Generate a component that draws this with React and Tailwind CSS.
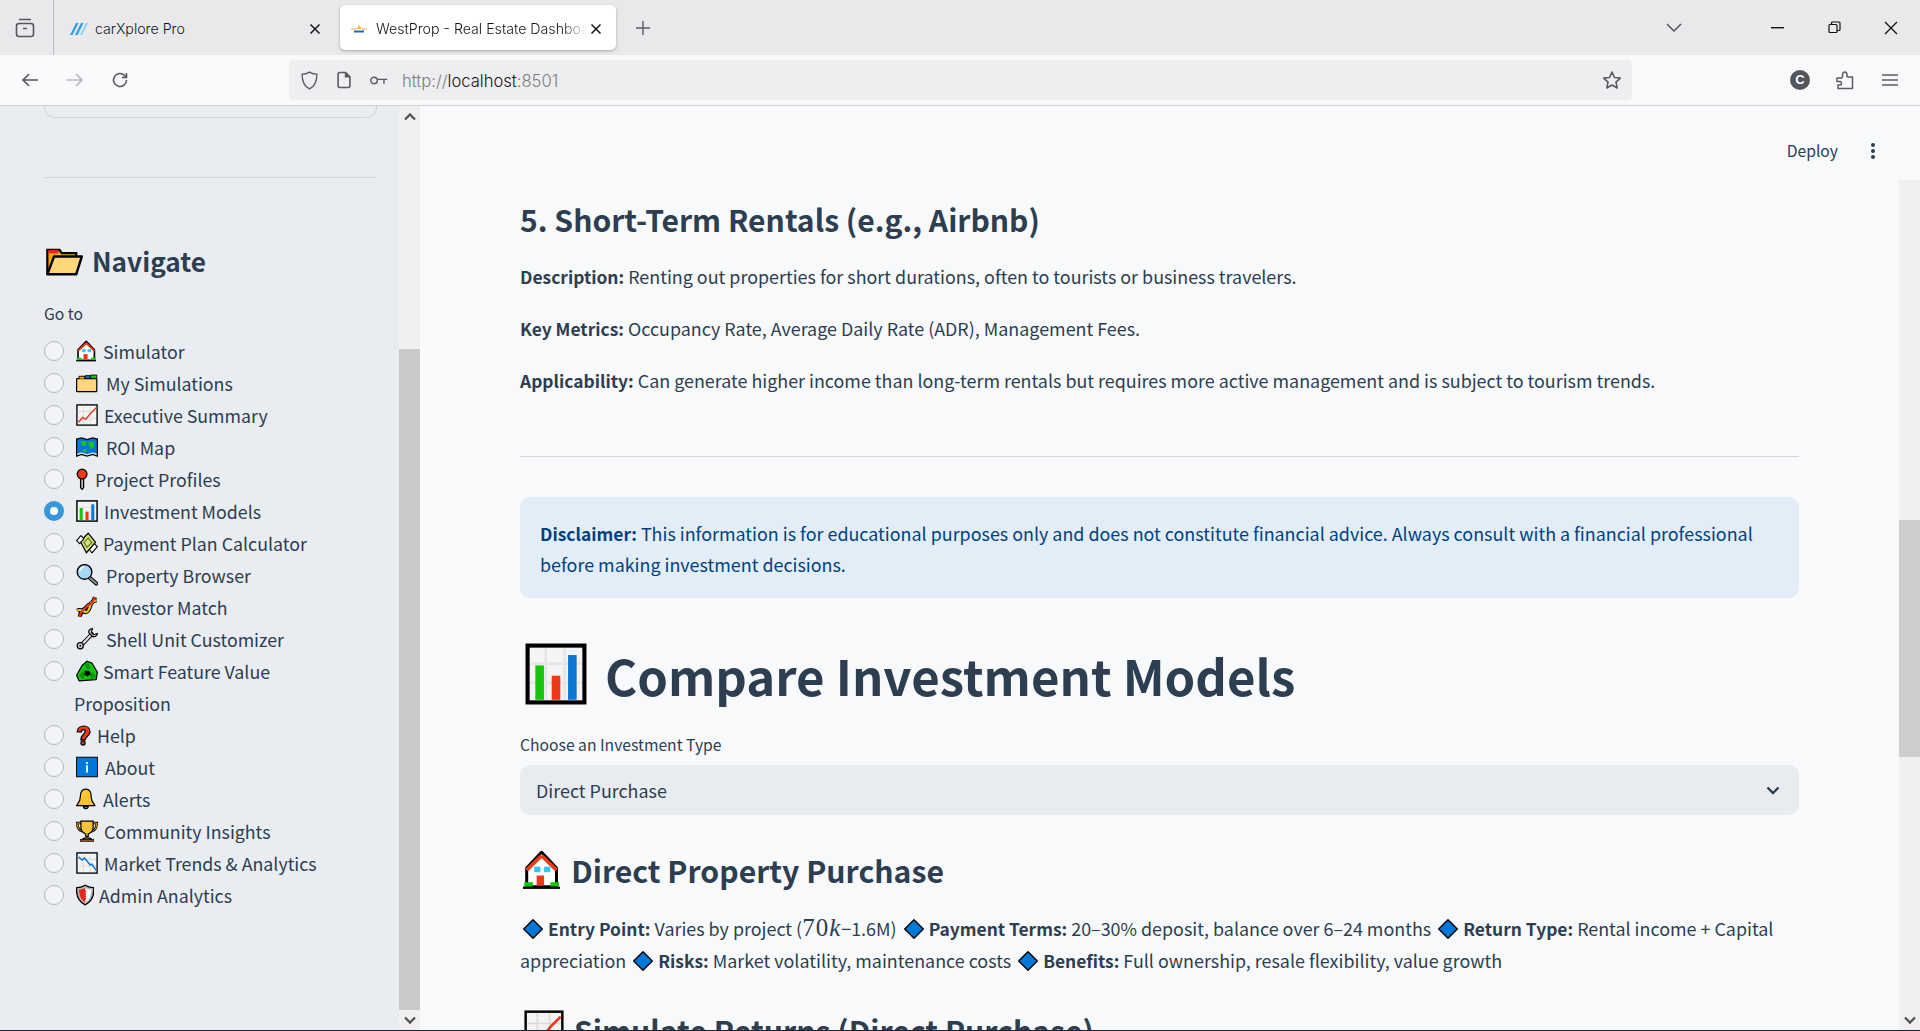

import React from "react";

const Emoji = ({ size = 22, w, children, vb = "0 0 36 36", className = "", par }) => (
  <svg width={w || size} height={size} viewBox={vb} preserveAspectRatio={par} className={"shrink-0 " + className}>{children}</svg>
);

const House = ({ size = 22 }) => (
  <Emoji size={size} w={size * 0.93} vb="3 0 30 36" par="none">
    <path d="M18 2 L6 16 V33 H30 V16 Z" fill="#fff" stroke="#000" strokeWidth="2.400" strokeLinejoin="round" />
    <path d="M18 5 L6 18 M18 5 L30 18" stroke="#ea3a17" strokeWidth="3" fill="none" />
    <rect x="12" y="15" width="5" height="5" fill="#35c6f4" />
    <rect x="20" y="15" width="5" height="5" fill="#35c6f4" />
    <rect x="14" y="23" width="6" height="9" fill="#ea3a17" />
    <rect x="4" y="29" width="7" height="4" fill="#16c60c" />
    <rect x="25" y="29" width="7" height="4" fill="#16c60c" />
    <rect x="3" y="33" width="30" height="2" fill="#000" />
  </Emoji>
);
const OpenFolder = ({ size = 22 }) => (
  <Emoji size={size}>
    <path d="M3 29 V8 H14 L16 11 H29 V16" fill="#f7a70b" stroke="#000" strokeWidth="2" />
    <path d="M4 8 H13 V11 H4Z" fill="#e8261a" />
    <path d="M3 30 L9 14 H34 L29 30 Z" fill="#ffd679" stroke="#000" strokeWidth="2.200" strokeLinejoin="round" />
  </Emoji>
);
const Dividers = ({ size = 22 }) => (
  <Emoji size={size}>
    <rect x="1" y="11" width="33" height="21" rx="1" fill="#ffd679" stroke="#000" strokeWidth="2" />
    <path d="M5 11 V7 H14 V11" fill="#f7a70b" stroke="#000" strokeWidth="1.500" />
    <path d="M15 10 V6 H23 V10" fill="#0c78d6" stroke="#000" strokeWidth="1.500" />
    <path d="M24 10 V5 H34 V10" fill="#16c60c" stroke="#000" strokeWidth="1.500" />
  </Emoji>
);
const ChartBase = ({ children, size }) => (
  <Emoji size={size}>
    <rect x="1.500" y="1.500" width="33" height="33" fill="#f4f4f4" stroke="#000" strokeWidth="2.200" />
    <path d="M12 3V33M23 3V33M3 12H33M3 23H33" stroke="#dcdcdc" strokeWidth="1.600" />
    {children}
  </Emoji>
);
const ChartUp = ({ size = 22 }) => (
  <ChartBase size={size}>
    <path d="M4 30 L11 22 L16 25 L24 15 L33 6" stroke="#ea3a17" strokeWidth="2.400" fill="none" />
  </ChartBase>
);
const ChartDown = ({ size = 22 }) => (
  <ChartBase size={size}>
    <path d="M4 8 L10 13 L14 10 L23 21 L26 20 L33 30" stroke="#0c78d6" strokeWidth="2.400" fill="none" />
  </ChartBase>
);
const BarChart = ({ size = 22, className = "" }) => (
  <Emoji size={size} className={className}>
    <rect x="1.500" y="1.500" width="33" height="33" fill="#f4f4f4" stroke="#000" strokeWidth="2.400" />
    <path d="M12 3V33M23 3V33M3 12H33M3 23H33" stroke="#e6e6e6" strokeWidth="1.600" />
    <rect x="6" y="13" width="5" height="20" fill="#16c60c" />
    <rect x="15.500" y="19" width="5" height="14" fill="#ea3a17" />
    <rect x="25" y="7" width="5" height="26" fill="#0c78d6" />
  </Emoji>
);
const MapIcon = ({ size = 22 }) => (
  <Emoji size={size}>
    <path d="M1 5 L9 3 L18 6 L27 3 L35 5 V33 L27 30 L18 33 L9 30 L1 33Z" fill="#0c78d6" />
    <path d="M9 8 L16 8 L17 14 L12 17 L8 13Z M20 10 L29 9 L30 18 L24 21 L21 16Z M12 22 L17 21 L16 27 L13 27Z" fill="#16c60c" />
    <path d="M1 29 L9 27 L18 30 L27 27 L35 29 V33 L27 30 L18 33 L9 30 L1 33Z" fill="#eee" />
    <path d="M1 5 L9 3 L18 6 L27 3 L35 5 V33 L27 30 L18 33 L9 30 L1 33Z" fill="none" stroke="#000" strokeWidth="2" />
  </Emoji>
);
const Pin = ({ size = 22 }) => (
  <Emoji size={size} w={(size * 20) / 36} vb="8 0 20 36">
    <circle cx="18" cy="10" r="8" fill="#ea3a17" stroke="#000" strokeWidth="2" />
    <path d="M15.500 18 H20.500 V32 L18 35 L15.500 32Z" fill="#b8b8b8" stroke="#000" strokeWidth="2" />
  </Emoji>
);
const PaymentIcon = ({ size = 22 }) => (
  <Emoji size={size}>
    <path d="M7 15 L20 2 L32 17 L17 34 Z" fill="#d5de7a" stroke="#000" strokeWidth="2" strokeLinejoin="round" />
    <path d="M1 14 L8 6 L13 11 L6 19Z M22 29 L30 19 L35 24 L26 34Z" fill="#fff" stroke="#000" strokeWidth="1.800" strokeLinejoin="round" />
    <path d="M13 17 L20 10 L26 17 L18 25Z" fill="none" stroke="#5d7424" strokeWidth="1.800" />
  </Emoji>
);
const Magnifier = ({ size = 22 }) => (
  <Emoji size={size}>
    <path d="M22 22 L33 32" stroke="#000" strokeWidth="6.500" strokeLinecap="round" />
    <path d="M22 22 L33 32" stroke="#8a8a8a" strokeWidth="3.600" strokeLinecap="round" />
    <circle cx="14" cy="13" r="12" fill="#a6d8f5" stroke="#000" strokeWidth="2.200" />
    <path d="M6 12 A8.500 8.500 0 0 1 13 5" stroke="#fff" strokeWidth="2.400" fill="none" />
  </Emoji>
);
const Dna = ({ size = 22 }) => (
  <Emoji size={size}>
    <path d="M2 24 C10 19 14 32 20 24 C25 16 22 9 34 7" stroke="#000" strokeWidth="6.500" fill="none" />
    <path d="M6 34 C7 24 14 22 18 17 C22 12 26 16 31 2" stroke="#000" strokeWidth="6.500" fill="none" />
    <path d="M12 21l6 6M17 14l7 6M23 9l5 4" stroke="#0c78d6" strokeWidth="2.200" />
    <path d="M2 24 C10 19 14 32 20 24 C25 16 22 9 34 7" stroke="#f7c60b" strokeWidth="3.400" fill="none" />
    <path d="M6 34 C7 24 14 22 18 17 C22 12 26 16 31 2" stroke="#ea3a17" strokeWidth="3.400" fill="none" />
  </Emoji>
);
const Wrench = ({ size = 22 }) => (
  <Emoji size={size}>
    <path d="M8 29 L26 10" stroke="#000" strokeWidth="6.500" strokeLinecap="round" />
    <path d="M8 29 L26 10" stroke="#dedede" strokeWidth="3.600" strokeLinecap="round" />
    <path d="M21 8 C20 5 22 1 27 1 L25 7 L29 11 L35 9 C35 13 30 15 27 14Z" fill="#dedede" stroke="#000" strokeWidth="2" strokeLinejoin="round" />
    <circle cx="7" cy="29" r="5" fill="#dedede" stroke="#000" strokeWidth="2" />
    <circle cx="7" cy="29" r="1.600" fill="#000" />
  </Emoji>
);
const Recycle = ({ size = 22 }) => (
  <Emoji size={size}>
    <path d="M18 2 L26 5 L35 20 L33 32 L5 34 L1 25 L10 9Z" fill="#16c60c" stroke="#000" strokeWidth="2" strokeLinejoin="round" />
    <path d="M14 8 L20 5 L25 14 L19 16Z M27 19 L33 27 L25 32 L22 25Z M4 26 L11 18 L16 23 L12 32Z" fill="#0b9a06" />
    <path d="M14 17 L22 18 L24 23 L19 27 L14 24Z" fill="#000" />
  </Emoji>
);
const Question = ({ size = 22 }) => (
  <Emoji size={size} w={(size * 24) / 36} vb="6 0 24 36">
    <path d="M8 13 C8 0 29 0 29 13 C29 20 21 20 21 26 H14 C14 17 21 17 21 12 C21 8 15 8 15 13Z" fill="#ea3a17" stroke="#000" strokeWidth="2" strokeLinejoin="round" />
    <circle cx="17.500" cy="31" r="3.400" fill="#ea3a17" stroke="#000" strokeWidth="2" />
  </Emoji>
);
const Info = ({ size = 22 }) => (
  <Emoji size={size}>
    <rect x="1" y="2" width="34" height="32" fill="#0078d7" stroke="#000" strokeWidth="1.600" />
    <rect x="16.500" y="15" width="3" height="12" fill="#fff" />
    <rect x="16.500" y="10" width="3" height="3" fill="#fff" />
  </Emoji>
);
const Bell = ({ size = 22 }) => (
  <Emoji size={size} w={(size * 32) / 36} vb="2 0 32 36">
    <path d="M18 2 C11 2 9 9 9 15 C9 23 4 25 3 29 H33 C32 25 27 23 27 15 C27 9 25 2 18 2Z" fill="#fcc332" stroke="#000" strokeWidth="2" strokeLinejoin="round" />
    <path d="M14 30 C14 35 22 35 22 30Z" fill="#c98f12" stroke="#000" strokeWidth="1.800" />
  </Emoji>
);
const Trophy = ({ size = 22 }) => (
  <Emoji size={size}>
    <path d="M9 5 H2 C2 14 6 18 12 19 M27 5 H34 C34 14 30 18 24 19" fill="none" stroke="#000" strokeWidth="4" />
    <path d="M9 5 H2 C2 14 6 18 12 19 M27 5 H34 C34 14 30 18 24 19" fill="none" stroke="#f7a70b" strokeWidth="1.600" />
    <path d="M8 2 H28 V12 C28 20 22 22 20 23 V27 H16 V23 C14 22 8 20 8 12Z" fill="#fcc332" stroke="#000" strokeWidth="2" />
    <path d="M10 33 C10 28 26 28 26 33Z" fill="#f7a70b" stroke="#000" strokeWidth="2" />
    <rect x="7" y="32" width="22" height="3" fill="#8e562e" stroke="#000" strokeWidth="1" />
  </Emoji>
);
const Shield = ({ size = 22 }) => (
  <Emoji size={size} w={(size * 30) / 36} vb="3 0 30 36">
    <path d="M18 2 C23 5 27 6 32 6 C33 20 28 29 18 34 C8 29 3 20 4 6 C9 6 13 5 18 2Z" fill="#b9b9b9" stroke="#000" strokeWidth="2.200" strokeLinejoin="round" />
    <path d="M18 6 C21 8 24 9 28 9 C28 19 25 26 18 30Z" fill="#fff" />
    <path d="M18 6 C15 8 12 9 8 9 C8 19 11 26 18 30 L18 26 L20 24 L18 22 L20 20 L18 18 L20 16 L18 14 L20 12 L18 10Z" fill="#e8261a" />
  </Emoji>
);
const Diamond = () => (
  <svg width="24" height="20" viewBox="0 0 24 20" className="inline-block align-[-3px] shrink-0">
    <path d="M13 0.800 L22.300 10 L13 19.200 L3.700 10 Z" fill="#0078d7" stroke="#000" strokeWidth="1.400" strokeLinejoin="round" />
  </svg>
);

const rows = [
  [House, "Simulator", "w-[27px]"],
  [Dividers, "My Simulations", "w-[30px]"],
  [ChartUp, "Executive Summary", "w-[28px]"],
  [MapIcon, "ROI Map", "w-[30px]"],
  [Pin, "Project Profiles", "w-[19px]"],
  [BarChart, "Investment Models", "w-[28px]", true],
  [PaymentIcon, "Payment Plan Calculator", "w-[27px]"],
  [Magnifier, "Property Browser", "w-[30px]"],
  [Dna, "Investor Match", "w-[30px]"],
  [Wrench, "Shell Unit Customizer", "w-[30px]"],
  [Recycle, "Smart Feature Value", "w-[27px]"],
  [Question, "Help", "w-[21px]"],
  [Info, "About", "w-[29px]"],
  [Bell, "Alerts", "w-[27px]"],
  [Trophy, "Community Insights", "w-[28px]"],
  [ChartDown, "Market Trends & Analytics", "w-[28px]"],
  [Shield, "Admin Analytics", "w-[23px]"],
];

const Radio = ({ on }) =>
  on ? (
    <span className="w-5 h-5 rounded-full bg-[#3498db] flex items-center justify-center shrink-0 mt-[6px]">
      <span className="w-2 h-2 rounded-full bg-white" />
    </span>
  ) : (
    <span className="w-5 h-5 rounded-full bg-[#f2f4f7] border border-[#b4b8be] shrink-0 mt-[6px]" />
  );

const Row = ({ Icon, label, on, slot }) => (
  <div className="flex h-8 items-start">
    <Radio on={on} />
    <span className="ml-[12px] flex items-center h-8 whitespace-nowrap">
      <span className={slot + " h-[22px] flex items-center"}><Icon size={22} /></span>
      <span>{label}</span>
    </span>
  </div>
);

const B = ({ children }) => <strong className="font-bold text-[17.400px] leading-none">{children}</strong>;

const ScrollArrow = ({ down }) => (
  <svg width="12" height="8" viewBox="0 0 12 8">
    <path d={down ? "M1 1.500 L6 6.500 L11 1.500" : "M1 6.500 L6 1.500 L11 6.500"} stroke="#555" strokeWidth="2.400" fill="none" />
  </svg>
);

const CloseX = ({ className = "" }) => (
  <svg className={className} width="12" height="12" viewBox="0 0 12 12" stroke="#15141a" strokeWidth="1.500"><path d="M1.500 1.500 L10.500 10.500 M10.500 1.500 L1.500 10.500" /></svg>
);

export default function App() {
  return (
    <div className="h-[1031px] w-[1920px] overflow-hidden flex flex-col bg-[#f8f9fb] text-[#2c3e50] font-['Noto_Sans_CJK_SC','Noto_Sans',sans-serif]">
      {/* Tab strip */}
      <div className="h-[55px] shrink-0 bg-[#e9e9ec] flex items-center text-[#15141a] text-[14.200px] font-['Inter','Noto_Sans',sans-serif]">
        <div className="w-[54px] h-full flex items-center pl-[15px] border-r border-[#bdbdc1]">
          <svg width="20" height="20" viewBox="0 0 20 20" fill="none" stroke="#55555c" strokeWidth="1.600">
            <rect x="1.500" y="5.500" width="17" height="13" rx="2.500" />
            <path d="M4 1.500h12M8 10.500h4" />
          </svg>
        </div>
        <div className="w-[286px] h-full flex items-center pl-[16px] pr-[19px] pt-[2px]">
          <svg width="18" height="12" viewBox="0 0 18 12">
            <path d="M0 12 L6 0 H8.500 L2.500 12Z M5 12 L11 0 H13.500 L7.500 12Z" fill="#2f9fe0" />
            <path d="M10 12 L16 0 H18 L12 12Z" fill="#8ad0f2" />
          </svg>
          <span className="ml-[7px] flex-1 font-light">carXplore Pro</span>
          <CloseX />
        </div>
        <div className="w-[276px] h-[45px] rounded-[5px] bg-white shadow-[0_1px_3px_rgba(0,0,0,0.3)] flex items-center pl-[10px] pr-[14px] pt-[2px]">
          <svg width="18" height="10" viewBox="0 0 16 10">
            <path d="M5 5 L8 1 L11 5Z" fill="#f3c13a" />
            <path d="M0 5H5M11 5H16" stroke="#c8b26a" strokeWidth="1" />
            <rect x="3" y="6.500" width="10" height="2" fill="#2463b5" />
          </svg>
          <span className="ml-[8px] flex-1 overflow-hidden whitespace-nowrap [mask-image:linear-gradient(to_right,black_88%,transparent)] font-light">WestProp - Real Estate Dashboard</span>
          <CloseX className="ml-[3px] shrink-0" />
        </div>
        <div className="w-[43px] flex justify-center ml-[5px]">
          <svg width="16" height="16" viewBox="0 0 16 16" stroke="#5b5b66" strokeWidth="1.400"><path d="M8 1V15M1 8H15" /></svg>
        </div>
        <div className="flex-1" />
        <svg width="16" height="9" viewBox="0 0 16 9" fill="none" stroke="#55555c" strokeWidth="1.500" className="mr-[89px]"><path d="M1 1 L8 8 L15 1" /></svg>
        <svg width="13" height="2" viewBox="0 0 13 2" className="mr-[44px]"><rect width="13" height="1.400" fill="#111" /></svg>
        <svg width="13" height="13" viewBox="0 0 13 13" fill="none" stroke="#111" strokeWidth="1.200" className="mr-[43px]">
          <rect x="1" y="3.500" width="8" height="8" rx="1" />
          <path d="M3.500 3.500V2a1 1 0 0 1 1-1H11a1 1 0 0 1 1 1v6.500a1 1 0 0 1-1 1H9" />
        </svg>
        <svg width="14" height="14" viewBox="0 0 14 14" stroke="#111" strokeWidth="1.300" className="mr-[22px]"><path d="M1 1 L13 13 M13 1 L1 13" /></svg>
      </div>

      {/* Toolbar */}
      <div className="h-[51px] shrink-0 bg-[#f9f9fb] border-b border-[#cfcfd4] flex items-center text-[#5b5b66]">
        <div className="w-[289px] flex items-center pl-[21px]">
          <svg width="18" height="16" viewBox="0 0 18 16" fill="none" stroke="#55555c" strokeWidth="1.600"><path d="M17 8H2M8 2L2 8L8 14" /></svg>
          <svg width="18" height="16" viewBox="0 0 18 16" fill="none" stroke="#b5b5ba" strokeWidth="1.600" className="ml-[27px]"><path d="M1 8H16M10 2L16 8L10 14" /></svg>
          <svg width="18" height="18" viewBox="0 0 18 18" fill="none" stroke="#55555c" strokeWidth="1.600" className="ml-[27px]"><path d="M15.500 9a6.500 6.500 0 1 1-2-4.700L15.500 6.500M15.500 2V6.500H11" /></svg>
        </div>
        <div className="w-[1343px] h-[40px] bg-[#eeeef0] rounded-[5px] flex items-center pl-[11px] pr-[10px]">
          <svg width="19" height="19" viewBox="0 0 16 18" fill="none" stroke="#5b5b66" strokeWidth="1.300"><path d="M8 1 C10.500 2.500 13 3 15 3 C15 10 13 14.500 8 17 C3 14.500 1 10 1 3 C3 3 5.500 2.500 8 1Z" /></svg>
          <svg width="14" height="18" viewBox="0 0 13 16" fill="none" stroke="#5b5b66" strokeWidth="1.500" className="ml-[18px]"><path d="M1 2.500A1.500 1.500 0 0 1 2.500 1H8l4 4v8.500a1.500 1.500 0 0 1-1.500 1.500h-8A1.500 1.500 0 0 1 1 13.500Z" /><path d="M8 1V5H12" fill="#5b5b66" /></svg>
          <svg width="20" height="11" viewBox="0 0 17 10" fill="none" stroke="#5b5b66" strokeWidth="1.300" className="ml-[18px]"><circle cx="4" cy="5" r="3" /><path d="M7 4H16M13 4V8" /></svg>
          <span className="ml-[13px] pt-[3px] text-[16.600px] font-['Inter','Noto_Sans',sans-serif] font-light text-[#7c7c84]">http://<span className="text-[#15141a]">localhost</span>:8501</span>
          <div className="flex-1" />
          <svg width="20" height="20" viewBox="0 0 24 24" fill="none" stroke="#5b5b66" strokeWidth="2" strokeLinejoin="round"><path d="M12 2.500 L15 9 L22 9.800 L16.800 14.500 L18.200 21.500 L12 18 L5.800 21.500 L7.200 14.500 L2 9.800 L9 9Z" /></svg>
        </div>
        <div className="flex-1 flex items-center pl-[158px]">
          <span className="w-5 h-5 rounded-full bg-[#55555c] text-white text-[13px] font-bold flex items-center justify-center font-['Liberation_Sans',sans-serif]">C</span>
          <svg width="18" height="20" viewBox="0 0 18 20" fill="none" stroke="#5b5b66" strokeWidth="1.500" strokeLinejoin="round" className="ml-[26px]"><path d="M1 8 H5 C7 8 6.500 6 6.500 5 C6.500 1 11 1 11 5 C11 6 10.500 7 12 7 H16.500 V18.500 H2 V15 H4 C6 15 6 11.500 4 11.500 H1Z" /></svg>
          <svg width="16" height="14" viewBox="0 0 16 14" stroke="#5b5b66" strokeWidth="1.500" className="ml-[28px]"><path d="M0 2H16M0 7H16M0 12H16" /></svg>
        </div>
      </div>

      {/* Page */}
      <div className="flex-1 min-h-0 flex border-b border-[#1d2230]">
        {/* Sidebar */}
        <aside className="w-[420px] shrink-0 flex bg-[#e9ecf0]">
          <div className="w-[399px] shrink-0 pl-[44px] pr-[22px] overflow-hidden">
            <div className="h-[12px] rounded-b-[10px] border border-t-0 border-[#d2d5da]" />
            <div className="h-px bg-[#d0d3d8] mt-[59px]" />
            <div className="mt-[61px] flex items-center h-[44px] text-[26.200px] font-bold leading-none">
              <OpenFolder size={40} />
              <span className="ml-[8px]">Navigate</span>
            </div>
            <div className="mt-[19px] h-[24px] leading-[24px] text-[15.700px]">Go to</div>
            <div className="mt-[9px] text-[17.800px] leading-8">
              {rows.map(([I, label, slot, on]) => (
                <React.Fragment key={label}>
                  <Row Icon={I} label={label} on={on} slot={slot} />
                  {label === "Smart Feature Value" && <div className="h-8 pl-[30px]">Proposition</div>}
                </React.Fragment>
              ))}
            </div>
          </div>
          <div className="w-[21px] shrink-0 bg-[#f0f0f0] flex flex-col">
            <div className="h-[18px] mt-[2px] flex items-center justify-center"><ScrollArrow /></div>
            <div className="h-[223px]" />
            <div className="flex-1 bg-[#c9c9c9]" />
            <div className="h-[20px] flex items-center justify-center bg-[#f0f0f0]"><ScrollArrow down /></div>
          </div>
        </aside>

        {/* Main */}
        <main className="flex-1 min-w-0 flex relative overflow-hidden">
          <div className="absolute right-[44px] top-[29px] flex items-center text-[15.700px] h-[32px]">
            <span>Deploy</span>
            <svg width="6" height="18" viewBox="0 0 6 18" fill="#2c3e50" className="ml-[32px]">
              <circle cx="3" cy="3" r="2" /><circle cx="3" cy="9" r="2" /><circle cx="3" cy="15" r="2" />
            </svg>
          </div>
          <div className="flex-1 min-w-0 pl-[100px] pr-[100px] text-[17.900px] leading-[30.700px]">
            <h3 className="mt-[90px] text-[30.100px] leading-[46px] font-bold">5. Short-Term Rentals (e.g., Airbnb)</h3>
            <p className="mt-[19px]"><B>Description:</B> Renting out properties for short durations, often to tourists or business travelers.</p>
            <p className="mt-[21px]"><B>Key Metrics:</B> Occupancy Rate, Average Daily Rate (ADR), Management Fees.</p>
            <p className="mt-[22px]"><B>Applicability:</B> Can generate higher income than long-term rentals but requires more active management and is subject to tourism trends.</p>
            <div className="h-px bg-[#d3d5d9] mt-[60px]" />
            <div className="mt-[40px] rounded-[10px] bg-[#e2edf7] text-[#004280] px-[20px] pt-[21px] h-[101px]">
              <B>Disclaimer:</B> This information is for educational purposes only and does not constitute financial advice. Always consult with a financial professional before making investment decisions.
            </div>
            <h1 className="mt-[40px] flex items-center h-[72px] text-[49.100px] font-bold leading-none">
              <BarChart size={62} className="ml-[5px]" />
              <span className="ml-[18px]">Compare Investment Models</span>
            </h1>
            <div className="mt-[23px] text-[15.700px] leading-[24px]">Choose an Investment Type</div>
            <div className="mt-[8px] h-[50px] rounded-[10px] bg-[#e9ecef] flex items-center pl-[16px] pr-[19px]">
              <span className="flex-1">Direct Purchase</span>
              <svg width="14" height="9" viewBox="0 0 14 9" fill="none" stroke="#2c3e50" strokeWidth="2.400"><path d="M1.500 1.500 L7 7 L12.500 1.500" /></svg>
            </div>
            <h3 className="mt-[32px] flex items-center h-[46px] text-[30.200px] font-bold leading-none">
              <span className="ml-[3px] flex"><House size={40} /></span>
              <span className="ml-[11px]">Direct Property Purchase</span>
            </h3>
            <p className="mt-[19px] leading-[32px]">
              <Diamond /> <B>Entry Point:</B> Varies by project (<span className="font-['Liberation_Serif',serif] text-[25px] leading-none tracking-[1px]">70<i>k</i></span>−1.6M) <Diamond /> <B>Payment Terms:</B> 20–30% deposit, balance over 6–24 months <Diamond /> <B>Return Type:</B> Rental income + Capital appreciation <Diamond /> <B>Risks:</B> Market volatility, maintenance costs <Diamond /> <B>Benefits:</B> Full ownership, resale flexibility, value growth
            </p>
            <h3 className="mt-[31px] flex items-center h-[46px] text-[30.200px] font-bold leading-none">
              <span className="ml-[4px] flex"><ChartUp size={40} /></span>
              <span className="ml-[10px]">Simulate Returns (Direct Purchase)</span>
            </h3>
          </div>
          <div className="w-[21px] shrink-0 bg-[#f0f0f0] flex flex-col mt-[74px]">
            <div className="h-[340px]" />
            <div className="h-[237px] bg-[#cdcdcd]" />
            <div className="flex-1" />
            <div className="h-[20px] flex items-center justify-center"><ScrollArrow down /></div>
          </div>
        </main>
      </div>
    </div>
  );
}
